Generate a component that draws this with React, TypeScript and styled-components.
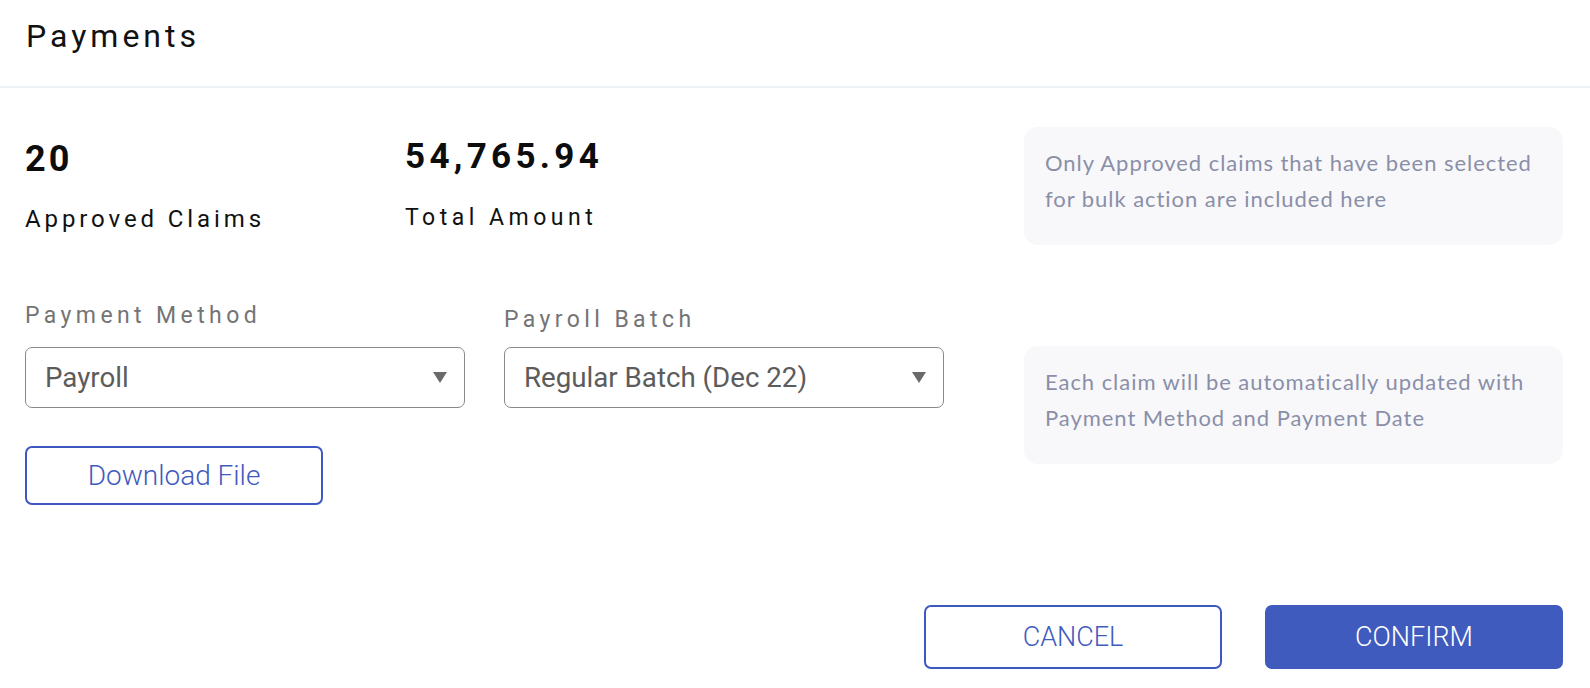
import React from 'react';
import styled, { createGlobalStyle } from 'styled-components';

const GlobalStyle = createGlobalStyle`
  html, body {
    margin: 0;
    padding: 0;
    background: #ffffff;
  }
  body {
    font-family: Roboto, 'Liberation Sans', Arial, sans-serif;
    color: #111;
  }
  * {
    box-sizing: border-box;
  }
`;

const Page = styled.div`
  width: 1590px;
  min-height: 688px;
  background: #fff;
`;

const Header = styled.div`
  height: 88px;
  padding: 12px 26px 0 26px;
  border-bottom: 2px solid #eef1f6;
`;

const Title = styled.h1`
  margin: 0;
  font-size: 32px;
  font-weight: 400;
  letter-spacing: 4px;
  line-height: 48px;
  color: #111;
`;

const Body = styled.div`
  display: grid;
  grid-template-columns: 1fr 539px;
  padding: 0 27px 0 25px;
`;

const LeftColumn = styled.div`
  display: flex;
  flex-direction: column;
`;

const StatsRow = styled.div`
  display: flex;
  align-items: flex-start;
  margin-top: 51px;
`;

const Stat = styled.div<{ $width?: number; $lift?: number }>`
  display: flex;
  flex-direction: column;
  width: ${(p) => (p.$width ? `${p.$width}px` : 'auto')};
  margin-top: ${(p) => -(p.$lift || 0)}px;
`;

const StatValue = styled.div<{ $size: number; $spacing: number }>`
  font-size: ${(p) => p.$size}px;
  font-weight: 700;
  letter-spacing: ${(p) => p.$spacing}px;
  line-height: 40px;
  color: #0d0d0d;
`;

const StatLabel = styled.div<{ $size: number; $gap: number; $spacing: number }>`
  margin-top: ${(p) => p.$gap}px;
  font-size: ${(p) => p.$size}px;
  letter-spacing: ${(p) => p.$spacing}px;
  line-height: 28px;
  color: #111;
`;

const FormRow = styled.div`
  display: flex;
  gap: 39px;
  margin-top: 69px;
`;

const Field = styled.div<{ $drop?: number }>`
  display: flex;
  flex-direction: column;
  width: 440px;
  padding-top: ${(p) => p.$drop || 0}px;
`;

const FieldLabel = styled.label`
  font-size: 23px;
  letter-spacing: 4.4px;
  line-height: 28px;
  color: #747474;
`;

const Select = styled.div<{ $top?: number }>`
  display: flex;
  align-items: center;
  justify-content: space-between;
  height: 61px;
  margin-top: ${(p) => p.$top ?? 17}px;
  padding: 0 17px 0 19px;
  border: 1.5px solid #8a8a8a;
  border-radius: 7px;
  font-size: 27.7px;
  color: #5c5c5c;
`;

const Arrow = () => (
  <svg width="14" height="11" viewBox="0 0 14 11">
    <polygon points="0,0 14,0 7,11" fill="#6a6a6a" />
  </svg>
);

const OutlineButton = styled.button<{ $width: number; $height: number; $upper?: boolean }>`
  width: ${(p) => p.$width}px;
  height: ${(p) => p.$height}px;
  border: 2px solid #3d58c0;
  border-radius: 7px;
  background: #fff;
  color: #3f5bbd;
  font-family: Roboto, 'Liberation Sans', Arial, sans-serif;
  font-size: ${(p) => (p.$upper ? 27 : 28)}px;
  font-weight: 300;
  text-transform: ${(p) => (p.$upper ? 'uppercase' : 'none')};
  cursor: pointer;
`;

const SolidButton = styled(OutlineButton)`
  background: #3f5bbd;
  border-color: #3f5bbd;
  color: #fff;
`;

const DownloadWrap = styled.div`
  margin-top: 38px;
`;

const RightColumn = styled.div`
  display: flex;
  flex-direction: column;
  gap: 101px;
  padding-top: 39px;
`;

const InfoBox = styled.div`
  min-height: 118px;
  padding: 18px 20px 18px 21px;
  border-radius: 14px;
  background: #f8f8fb;
  font-family: Lato, 'Open Sans', sans-serif;
  font-size: 22px;
  letter-spacing: 0.95px;
  line-height: 36px;
  color: #8a8fa8;
`;

const Footer = styled.div`
  display: flex;
  justify-content: flex-end;
  gap: 43px;
  margin-top: 100px;
  padding-right: 27px;
`;

const App = () => {
  return (
    <Page>
      <GlobalStyle />
      <Header>
        <Title>Payments</Title>
      </Header>
      <Body>
        <LeftColumn>
          <StatsRow>
            <Stat $width={380}>
              <StatValue $size={36} $spacing={3}>20</StatValue>
              <StatLabel $size={24} $gap={26} $spacing={3.9}>Approved Claims</StatLabel>
            </Stat>
            <Stat $lift={2}>
              <StatValue $size={35} $spacing={4.3}>54,765.94</StatValue>
              <StatLabel $size={23} $gap={27} $spacing={4.5}>Total Amount</StatLabel>
            </Stat>
          </StatsRow>
          <FormRow>
            <Field>
              <FieldLabel>Payment Method</FieldLabel>
              <Select>
                <span>Payroll</span>
                <Arrow />
              </Select>
            </Field>
            <Field $drop={4}>
              <FieldLabel>Payroll Batch</FieldLabel>
              <Select $top={13}>
                <span>Regular Batch (Dec 22)</span>
                <Arrow />
              </Select>
            </Field>
          </FormRow>
          <DownloadWrap>
            <OutlineButton $width={298} $height={59}>Download File</OutlineButton>
          </DownloadWrap>
        </LeftColumn>
        <RightColumn>
          <InfoBox>
            Only Approved claims that have been selected
            <br />
            for bulk action are included here
          </InfoBox>
          <InfoBox>
            Each claim will be automatically updated with
            <br />
            Payment Method and Payment Date
          </InfoBox>
        </RightColumn>
      </Body>
      <Footer>
        <OutlineButton $width={298} $height={64} $upper>Cancel</OutlineButton>
        <SolidButton $width={298} $height={64} $upper>Confirm</SolidButton>
      </Footer>
    </Page>
  );
};

export default App;
